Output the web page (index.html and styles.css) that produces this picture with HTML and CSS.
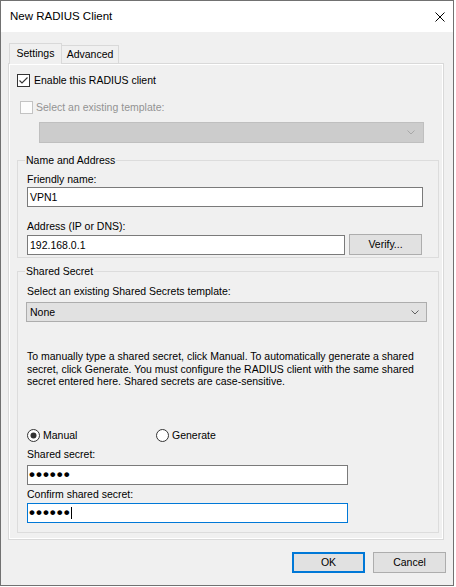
FILE: index.html
```html
<!DOCTYPE html>
<html lang="en">
<head>
  <meta charset="UTF-8">
  <meta name="viewport" content="width=device-width, initial-scale=1.0">
  <title>New RADIUS Client</title>
  <link rel="stylesheet" href="styles.css">
</head>
<body>
  <div class="dialog">
    <!-- Title bar -->
    <div class="titlebar">
      <span class="title">New RADIUS Client</span>
      <svg class="close" width="10" height="10" viewBox="0 0 10 10">
        <path d="M0.5 0.5 L9.5 9.5 M9.5 0.5 L0.5 9.5" stroke="#000" stroke-width="1" fill="none"/>
      </svg>
    </div>

    <div class="dialog-body">
      <!-- Tabs -->
      <div class="tabs">
        <div class="tab active">Settings</div>
        <div class="tab">Advanced</div>
      </div>

      <div class="tab-page">
        <div class="check-row enable-row">
          <svg class="box" width="13" height="13" viewBox="0 0 13 13">
            <rect x="0.5" y="0.5" width="12" height="12" fill="#fff" stroke="#333"/>
            <path d="M2.5 6.5 L5 9 L10.5 3.5" fill="none" stroke="#333" stroke-width="1.1"/>
          </svg>
          <span>Enable this RADIUS client</span>
        </div>

        <div class="check-row template-row disabled">
          <svg class="box" width="13" height="13" viewBox="0 0 13 13">
            <rect x="0.5" y="0.5" width="12" height="12" fill="#fcfcfc" stroke="#c3c3c3"/>
          </svg>
          <span>Select an existing template:</span>
        </div>

        <div class="combo template-combo disabled">
          <span></span>
          <svg width="8" height="5" viewBox="0 0 8 5">
            <path d="M0.5 0.5 L4 4 L7.5 0.5" fill="none" stroke="#a8a8a8"/>
          </svg>
        </div>

        <!-- Name and Address -->
        <fieldset class="group name-group">
          <legend>Name and Address</legend>
          <div class="label">Friendly name:</div>
          <div class="textbox name-box">VPN1</div>
          <div class="label address-label">Address (IP or DNS):</div>
          <div class="address-row">
            <div class="textbox address-box">192.168.0.1</div>
            <button class="btn verify">Verify...</button>
          </div>
        </fieldset>

        <!-- Shared Secret -->
        <fieldset class="group secret-group">
          <legend>Shared Secret</legend>
          <div class="label">Select an existing Shared Secrets template:</div>
          <div class="combo secret-combo">
            <span>None</span>
            <svg width="8" height="5" viewBox="0 0 8 5">
              <path d="M0.5 0.5 L4 4 L7.5 0.5" fill="none" stroke="#606060"/>
            </svg>
          </div>

          <p class="hint">
            To manually type a shared secret, click Manual. To automatically generate a shared<br>
            secret, click Generate. You must configure the RADIUS client with the same shared<br>
            secret entered here. Shared secrets are case-sensitive.
          </p>

          <div class="radio-row">
            <div class="radio manual">
              <svg width="13" height="13" viewBox="0 0 13 13">
                <circle cx="6.5" cy="6.5" r="6" fill="#fff" stroke="#333"/>
                <circle cx="6.5" cy="6.5" r="3" fill="#333"/>
              </svg>
              <span>Manual</span>
            </div>
            <div class="radio">
              <svg width="13" height="13" viewBox="0 0 13 13">
                <circle cx="6.5" cy="6.5" r="6" fill="#fff" stroke="#333"/>
              </svg>
              <span>Generate</span>
            </div>
          </div>

          <div class="label secret-label">Shared secret:</div>
          <div class="textbox secret-box">••••••</div>
          <div class="label confirm-label">Confirm shared secret:</div>
          <div class="textbox secret-box focused">••••••<span class="caret"></span></div>
        </fieldset>
      </div>

      <!-- Dialog buttons -->
      <div class="buttons">
        <button class="btn default">OK</button>
        <button class="btn">Cancel</button>
      </div>
    </div>
  </div>
</body>
</html>
```

FILE: styles.css
```css
/* General Styles */
* {
  box-sizing: border-box;
}

body {
  margin: 0;
  background-color: #fff;
  font-family: "Liberation Sans", Arial, sans-serif;
  font-size: 10.5px;
  line-height: 13px;
  color: #000;
}

.dialog {
  width: 454px;
  height: 586px;
  border: 1px solid #717171;
  background-color: #f0f0f0;
}

/* Title bar */
.titlebar {
  height: 31px;
  background-color: #fff;
  display: flex;
  align-items: center;
  justify-content: space-between;
  padding: 0 8px 0 9px;
}

.title {
  font-size: 11.5px;
}

.dialog-body {
  padding: 11px 9px 0 7px;
}

/* Tabs */
.tabs {
  display: flex;
  align-items: flex-end;
  height: 21px;
  margin-bottom: -1px;
  position: relative;
  z-index: 1;
}

.tab {
  height: 18px;
  width: 58px;
  margin-left: -1px;
  margin-bottom: 1px;
  border: 1px solid #d9d9d9;
  border-bottom: none;
  background-color: #f0f0f0;
  text-align: center;
  line-height: 17px;
}

.tab.active {
  width: 53px;
  height: 21px;
  margin-left: 1px;
  margin-bottom: 0;
  line-height: 19px;
  position: relative;
  z-index: 1;
}

.tab-page {
  width: 436px;
  height: 477px;
  border: 1px solid #d9d9d9;
  box-shadow: inset 0 0 0 1px #fff;
  padding: 10px 0 0 8px;
}

/* Checkboxes */
.check-row {
  display: flex;
  align-items: center;
  height: 13px;
  gap: 4px;
}

.check-row .box {
  flex-shrink: 0;
}

.template-row {
  margin-top: 14px;
  margin-left: 3px;
  gap: 3px;
}

.disabled {
  color: #939393;
}

/* Combo boxes */
.combo {
  display: flex;
  align-items: center;
  justify-content: space-between;
  border: 1px solid #adadad;
  background-color: #e1e1e1;
  padding: 0 7px 0 3px;
}

.template-combo {
  margin: 8px 0 0 22px;
  width: 385px;
  height: 21px;
  background-color: #cccccc;
  border-color: #bfbfbf;
  padding-right: 8px;
}

.secret-combo {
  margin: 4px 0 0 -1px;
  width: 401px;
  height: 20px;
}

/* Group boxes */
.group {
  margin: 0;
  width: 422px;
  border: 1px solid #dcdcdc;
  padding: 6px 0 2px 9px;
  min-width: 0;
}

.group legend {
  padding: 0 1px;
  margin-left: -2px;
  line-height: 13px;
}

.name-group {
  margin-top: 11px;
}

.secret-group {
  margin-top: 7px;
  padding-top: 7px;
  padding-bottom: 9px;
}

.label {
  height: 13px;
  white-space: nowrap;
}

.textbox {
  height: 20px;
  border: 1px solid #7a7a7a;
  background-color: #fff;
  padding: 0 2px;
  line-height: 18px;
  white-space: nowrap;
}

.name-box {
  margin-top: 1px;
  width: 396px;
}

.address-label {
  margin-top: 13px;
}

.address-row {
  display: flex;
  align-items: flex-start;
  gap: 4px;
  margin-top: 1px;
}

.address-box {
  margin-top: 1px;
  width: 318px;
}

/* Buttons */
.btn {
  font-family: inherit;
  font-size: inherit;
  color: #000;
  width: 73px;
  height: 21px;
  padding: 0;
  border: 1px solid #adadad;
  background-color: #e1e1e1;
  line-height: 19px;
}

.btn.default {
  border: 2px solid #0078d7;
  line-height: 17px;
}

.hint {
  margin: 28px 0 0;
  height: 38px;
  line-height: 12.5px;
  white-space: nowrap;
}

/* Radio buttons */
.radio-row {
  display: flex;
  margin-top: 41px;
  height: 13px;
}

.radio {
  display: flex;
  align-items: center;
  gap: 3px;
}

.radio.manual {
  width: 129px;
}

.secret-label {
  margin-top: 6px;
}

/* Masked password text */
.secret-box {
  margin-top: 4px;
  width: 321px;
  font-size: 17px;
  font-weight: bold;
  letter-spacing: 1px;
  padding-left: 1px;
  display: flex;
  align-items: center;
}

.confirm-label {
  margin-top: 3px;
}

.secret-box.focused {
  margin-top: 2px;
  border-color: #0078d7;
}

.caret {
  display: inline-block;
  width: 1px;
  height: 12px;
  background-color: #000;
  margin-left: 0;
}

.buttons {
  display: flex;
  justify-content: flex-end;
  gap: 8px;
  margin: 12px -2px 0 0;
}
```
